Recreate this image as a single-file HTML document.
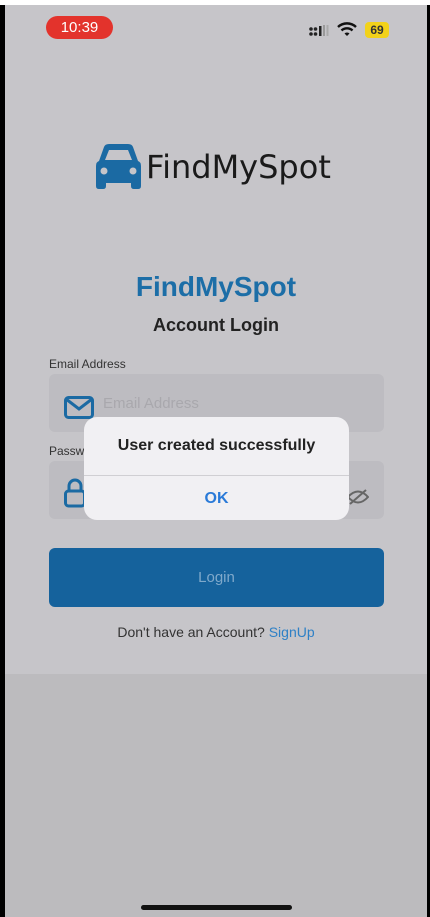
<!DOCTYPE html>
<html><head><meta charset="utf-8"><style>
*{margin:0;padding:0;box-sizing:border-box}
body{width:430px;height:917px;overflow:hidden;background:#000;font-family:"Liberation Sans",sans-serif;position:relative}
.scr{position:absolute;left:5px;top:0;width:422px;height:917px;background:#bcbbbe}
.top{position:absolute;left:5px;top:5px;width:422px;height:669px;background:#c6c5c9}
.wt{position:absolute;left:0;top:0;width:430px;height:5px;background:#fff}
.a{position:absolute}
.time{left:46px;top:16px;width:67px;height:23px;background:#e3332c;border-radius:12px;color:#fff;font-size:15px;text-align:center;line-height:23px}
.field{left:49px;width:335px;height:58px;background:#bdbcc1;border-radius:6px}
.lbl{font-size:12px;color:#333}
</style></head><body>
<div class="scr"></div><div class="top"></div><div class="wt"></div>
<div class="a time">10:39</div>
<svg class="a" style="left:309px;top:24px" width="20" height="14" viewBox="0 0 20 14"><circle cx="2" cy="5" r="1.8" fill="#222"/><circle cx="2" cy="10" r="1.8" fill="#222"/><circle cx="6.5" cy="5" r="1.8" fill="#222"/><circle cx="6.5" cy="10" r="1.8" fill="#222"/><rect x="10" y="2" width="2.5" height="10" fill="#222"/><rect x="14" y="1" width="2" height="11" fill="#999"/><rect x="17.5" y="1" width="2" height="11" fill="#aaa"/></svg>
<svg class="a" style="left:337px;top:22px" width="20" height="15" viewBox="0 0 20 15"><path d="M1 5 A13 13 0 0 1 19 5" stroke="#111" stroke-width="2.4" fill="none"/><path d="M4.5 8.5 A8 8 0 0 1 15.5 8.5" stroke="#111" stroke-width="2.4" fill="none"/><path d="M7.5 11.5 L10 14 L12.5 11.5 A3.5 3.5 0 0 0 7.5 11.5Z" fill="#111"/></svg>
<div class="a" style="left:365px;top:22px;width:24px;height:16px;background:#f2d21a;border-radius:4px;font-size:12px;font-weight:bold;line-height:16px;text-align:center;color:#333">69</div>
<svg class="a" style="left:96px;top:143px" width="45" height="46" viewBox="0 0 45 46"><path d="M8 4 Q9 1 13 1 H32 Q36 1 37 4 L42 18 Q45 19 45 23 V43 Q45 46 42 46 H38 Q35 46 35 43 V40 H10 V43 Q10 46 7 46 H3 Q0 46 0 43 V23 Q0 19 3 18Z M9 17 H36 L32 7 H13Z" fill="#1b6aa3" fill-rule="evenodd"/><circle cx="8" cy="28" r="3.5" fill="#c6c5c9"/><circle cx="37" cy="28" r="3.5" fill="#c6c5c9"/></svg>
<div class="a" style="left:146px;top:148px;font-size:32px;color:#1a1a1a;font-family:'DejaVu Sans',sans-serif">FindMySpot</div>
<div class="a" style="left:0;width:432px;top:271px;text-align:center;font-size:28px;font-weight:bold;color:#1c6ea7">FindMySpot</div>
<div class="a" style="left:0;width:432px;top:315px;text-align:center;font-size:18px;font-weight:bold;color:#222">Account Login</div>
<div class="a lbl" style="left:49px;top:357px">Email Address</div>
<div class="a field" style="top:374px"></div>
<svg class="a" style="left:64px;top:396px" width="30" height="23" viewBox="0 0 30 23"><rect x="1.5" y="1.5" width="27" height="20" rx="3" fill="none" stroke="#1b6aa3" stroke-width="3"/><path d="M2 3 L15 13 L28 3" fill="none" stroke="#1b6aa3" stroke-width="3"/></svg>
<div class="a" style="left:103px;top:395px;font-size:15px;color:#a9a8ad">Email Address</div>
<div class="a lbl" style="left:49px;top:444px">Passw</div>
<div class="a field" style="top:461px"></div>
<svg class="a" style="left:64px;top:478px" width="22" height="30" viewBox="0 0 22 30"><path d="M5 13 V8 A6 6 0 0 1 17 8 V13" fill="none" stroke="#1b6aa3" stroke-width="3"/><rect x="1.5" y="13" width="19" height="15" rx="3" fill="none" stroke="#1b6aa3" stroke-width="3"/></svg>
<svg class="a" style="left:347px;top:488px" width="22" height="18" viewBox="0 0 22 18"><path d="M1 9 Q11 -2 21 9 Q11 20 1 9Z" fill="none" stroke="#666" stroke-width="2"/><path d="M3 16 L19 2" stroke="#666" stroke-width="2"/></svg>
<div class="a" style="left:84px;top:417px;width:265px;height:103px;background:#f1f0f3;border-radius:13px"></div>
<div class="a" style="left:84px;top:437px;width:265px;text-align:center;font-size:16px;color:#222;font-weight:bold">User created successfully</div>
<div class="a" style="left:84px;top:475px;width:265px;height:1px;background:#d0cfd3"></div>
<div class="a" style="left:84px;top:490px;width:265px;text-align:center;font-size:16px;font-weight:bold;color:#2a7ad8">OK</div>
<div class="a" style="left:49px;top:548px;width:335px;height:59px;background:#15629c;border-radius:6px;text-align:center;line-height:59px;color:#7fa9cb;font-size:15px">Login</div>
<div class="a" style="left:0;width:432px;top:624px;text-align:center;font-size:14px;color:#333">Don't have an Account? <span style="color:#2e80c6">SignUp</span></div>
<div class="a" style="left:141px;top:905px;width:151px;height:5px;background:#111;border-radius:3px"></div>
</body></html>
